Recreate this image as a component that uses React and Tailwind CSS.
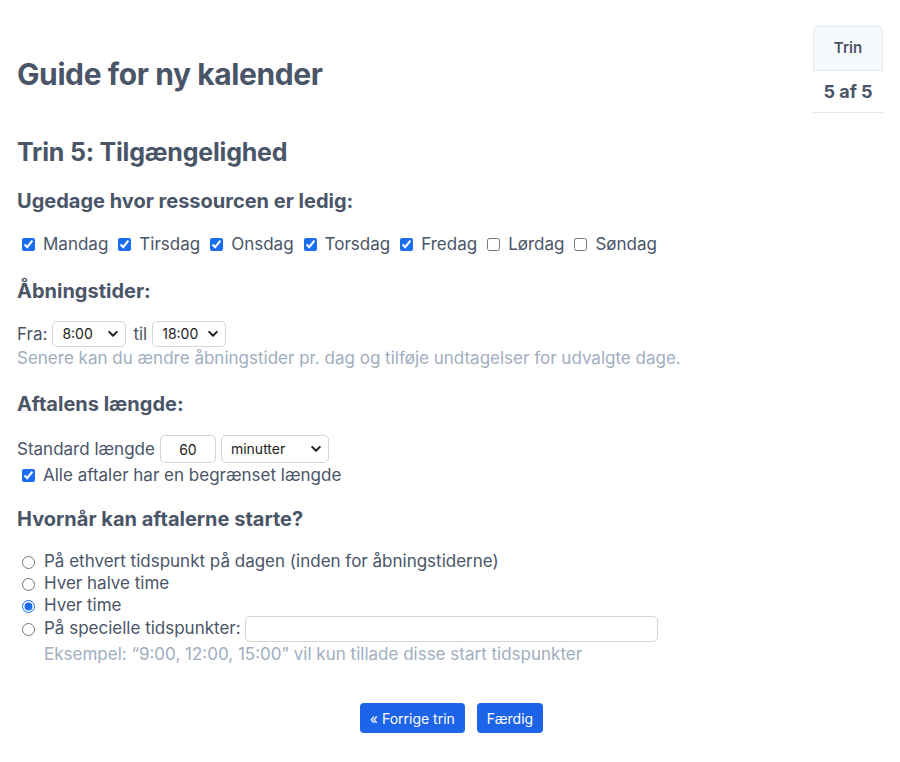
import React from "react";

const Chevron = () => (
  <svg className="pointer-events-none absolute right-[8px] top-1/2 -translate-y-1/2" width="10" height="7" viewBox="0 0 10 7" fill="none">
    <path d="M1.2 1.4 L5 5.2 L8.8 1.4" stroke="#222" strokeWidth="2" strokeLinecap="round" strokeLinejoin="round" />
  </svg>
);

function Select({ value, w, h = "h-[26px]" }) {
  return (
    <span className={`relative inline-block ${w}`}>
      <select defaultValue={value} className={`${h} w-full appearance-none rounded-[5px] border border-[#d4d4d4] bg-white pl-[9px] text-[14px] text-[#222] outline-none`}>
        <option>{value}</option>
      </select>
      <Chevron />
    </span>
  );
}

const Check = ({ checked }) => (
  <input type="checkbox" defaultChecked={checked} className="m-0 h-[13px] w-[13px] shrink-0 accent-[#1a6df0]" />
);

const Radio = ({ checked }) => (
  <input type="radio" name="start" defaultChecked={checked} className="m-0 h-[13px] w-[13px] shrink-0 accent-[#1a6df0]" />
);

export default function App() {
  const days = [
    ["Mandag", true],
    ["Tirsdag", true],
    ["Onsdag", true],
    ["Torsdag", true],
    ["Fredag", true],
    ["Lørdag", false],
    ["Søndag", false],
  ];
  return (
    <div className="min-h-[762px] bg-white font-['Inter','Liberation_Sans',Arial,sans-serif] text-[#4a5568]">
      <div className="flex justify-between pl-[17px] pr-[17px] pt-[26px]">
        <h1 className="mt-[31px] text-[30px] font-bold leading-[34px] tracking-[-0.4px]">Guide for ny kalender</h1>
        <div className="w-[70px] text-center">
          <div className="flex h-[44px] items-center justify-center rounded-t-[6px] border border-b-0 border-[#e2e8f0] bg-[#f7fafc] text-[15px] font-semibold">Trin</div>
          <div className="flex h-[43px] items-center justify-center border-y border-[#e2e8f0] text-[18px] font-bold">5 af 5</div>
        </div>
      </div>

      <div className="px-[17px]">
        <h2 className="mt-[24px] text-[25px] font-bold leading-[30px] tracking-[-0.2px]">Trin 5: Tilgængelighed</h2>

        <h3 className="mt-[22px] text-[20px] font-bold leading-[24px]">Ugedage hvor ressourcen er ledig:</h3>
        <div className="mt-[20px] flex items-center pl-[5px] text-[17px] leading-[22px]">
          {days.map(([d, c]) => (
            <label key={d} className="mr-[10px] flex items-center gap-[8px]">
              <Check checked={c} />
              <span>{d}</span>
            </label>
          ))}
        </div>

        <h3 className="mt-[24px] text-[20px] font-bold leading-[24px]">Åbningstider:</h3>
        <div className="mt-[18px] flex h-[26px] items-center gap-[5px] text-[17px] leading-[22px]">
          <span>Fra:</span>
          <Select value="8:00" w="w-[74px]" />
          <span className="ml-[2px]">til</span>
          <Select value="18:00" w="w-[74px]" />
        </div>
        <p className="text-[17px] leading-[22px] text-[#a0aec0]">Senere kan du ændre åbningstider pr. dag og tilføje undtagelser for udvalgte dage.</p>

        <h3 className="mt-[23px] text-[20px] font-bold leading-[24px]">Aftalens længde:</h3>
        <div className="mt-[19px] flex h-[28px] items-center gap-[5px] text-[17px] leading-[22px]">
          <span>Standard længde</span>
          <input defaultValue="60" className="h-[28px] w-[56px] rounded-[5px] border border-[#d4d4d4] text-center text-[14px] text-[#222] outline-none" />
          <Select value="minutter" w="w-[108px]" h="h-[28px]" />
        </div>
        <label className="mt-[1px] flex items-center gap-[8px] pl-[5px] text-[17px] leading-[22px]">
          <Check checked />
          <span>Alle aftaler har en begrænset længde</span>
        </label>

        <h3 className="mt-[21px] text-[20px] font-bold leading-[24px]">Hvornår kan aftalerne starte?</h3>
        <div className="mt-[20px] flex flex-col pl-[5px] text-[17px]">
          <label className="flex h-[22px] items-center gap-[9px]"><Radio /><span>På ethvert tidspunkt på dagen (inden for åbningstiderne)</span></label>
          <label className="flex h-[22px] items-center gap-[9px]"><Radio /><span>Hver halve time</span></label>
          <label className="flex h-[22px] items-center gap-[9px]"><Radio checked /><span>Hver time</span></label>
          <label className="flex h-[24px] items-center gap-[9px]">
            <Radio />
            <span>På specielle tidspunkter:</span>
            <input className="-ml-[5px] h-[26px] w-[413px] rounded-[5px] border border-[#d4d4d4] outline-none" />
          </label>
          <p className="mt-[2px] pl-[22px] leading-[22px] text-[#a0aec0]">Eksempel: “9:00, 12:00, 15:00” vil kun tillade disse start tidspunkter</p>
        </div>

        <div className="mt-[38px] flex justify-center gap-[12px] pl-[3px]">
          <button className="h-[30px] rounded-[4px] bg-[#1d64e8] px-[10px] text-[14px] text-white">« Forrige trin</button>
          <button className="h-[30px] rounded-[4px] bg-[#1d64e8] px-[10px] text-[14px] text-white">Færdig</button>
        </div>
      </div>
    </div>
  );
}
